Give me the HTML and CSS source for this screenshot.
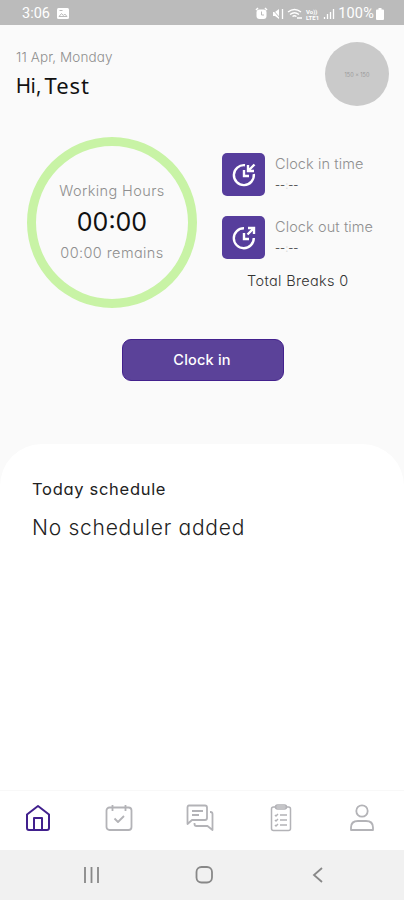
FILE: index.html
```html
<!DOCTYPE html>
<html lang="en">
<head>
<meta charset="utf-8">
<title>Working hours</title>
<link rel="stylesheet" href="styles.css">
</head>
<body>
<div class="status">
  <span class="time">3:06</span>
  <svg class="photo" width="12" height="11" viewBox="0 0 12 11"><rect width="12" height="11" rx="1.5" fill="#fff"/><path d="M2 8.5l2.5-3 1.8 2 1.5-1.500 2.200 2.500zM2.500 2.500h3" fill="none" stroke="#bbb"/></svg>
  <svg class="signals" width="80" height="14" viewBox="0 0 80 14" fill="none" stroke="#fff">
    <path d="M1 3l2-2M10 1l2 2" stroke-width="1.500"/><rect x="1.500" y="2.500" width="10" height="9.500" rx="3" fill="#fff" stroke="none"/><path d="M6.500 4.500v3.500h2.500" stroke="#bbb"/>
    <path d="M18 5h2l4-3v10l-4-3h-2z" fill="#fff" stroke="none"/><path d="M17 2l9 10" stroke="#bbb"/><path d="M27.500 2v10" stroke-width="1.300"/>
    <path d="M33 5q6.500-5 13 0M35 7.500q4.500-3.500 9 0M37.500 9.500q2-1.500 4 0" stroke-width="1.400"/><path d="M42 11h5" stroke-width="1.500"/>
    <text class="lte" x="51" y="6.500">Vo))</text><text class="lte" x="51" y="12.500">LTE1</text>
    <path d="M69.500 12v-2M72.500 12v-5M75.500 12v-7M78.500 12v-10" stroke-width="1.300"/>
  </svg>
  <span class="percent">100%</span>
  <svg class="battery" width="8" height="12" viewBox="0 0 8 12"><path d="M2.500 0h3v1.500H7q1 0 1 1V11q0 1-1 1H1q-1 0-1-1V2.500q0-1 1-1h1.500z" fill="#fff"/></svg>
</div>
<header class="header">
  <div>
    <div class="date">11 Apr, Monday</div>
    <div class="greeting"><span class="hi">Hi,</span><span class="name">Test</span></div>
  </div>
  <div class="avatar">150 x 150</div>
</header>
<main class="summary">
  <section class="ring">
    <span class="working">Working Hours</span>
    <span class="total">00:00</span>
    <span class="remains">00:00 remains</span>
  </section>
  <section class="clocks">
    <div class="clock">
      <div class="tile"><svg width="24" height="24" viewBox="0 0 24 24" fill="none" stroke="#fff" stroke-width="2.400"><path d="M13 2.200A10 10 0 1 0 21.800 11M12 7v6h5M22.500 1.500l-6 6M16 2v6h6"/></svg></div>
      <div class="info"><span class="label in">Clock in time</span><span class="dash">--<i>:</i>--</span></div>
    </div>
    <div class="clock">
      <div class="tile"><svg width="24" height="24" viewBox="0 0 24 24" fill="none" stroke="#fff" stroke-width="2.400"><path d="M12 2.200A10 10 0 1 0 21.800 12M12 7v6h5M15.500 8.500l6-6M16 2h6v6"/></svg></div>
      <div class="info"><span class="label out">Clock out time</span><span class="dash">--<i>:</i>--</span></div>
    </div>
    <div class="breaks">Total Breaks 0</div>
  </section>
</main>
<button class="clock-in">Clock in</button>
<section class="schedule">
  <h2>Today schedule</h2>
  <p>No scheduler added</p>
</section>
<nav class="tabs">
  <svg class="active" viewBox="0 0 28 28"><path d="M3 10.500L14 2l11 8.500V24q0 2-2 2H5q-2 0-2-2zM10 26V14h8v12"/></svg>
  <svg viewBox="0 0 28 28"><rect x="1.500" y="3.500" width="25" height="22.500" rx="3"/><path d="M7.500 1v6M20.500 1v6M9.500 14.500l3.500 3.500 6-6"/></svg>
  <svg viewBox="0 0 28 28"><path d="M3 1.500h16q2 0 2 2V14q0 2-2 2H6l-4.500 4V3.500q0-2 1.500-2zM6 7h11M6 11h7M8.500 19v1q0 2 2 2h11l5 4V10q0-2-2-2H24"/></svg>
  <svg class="thin" viewBox="0 0 28 28"><rect x="4.500" y="3" width="19" height="23.500" rx="2"/><rect x="8.500" y="1" width="11" height="4" rx="2"/><path d="M8 11l1 1 2-2M13 11h7M8 16l1 1 2-2M13 16h7M8 21l1 1 2-2M13 21h7"/></svg>
  <svg viewBox="0 0 28 28"><circle cx="14" cy="7" r="5.700"/><path d="M3 26v-2.500q0-6.500 7-6.500h8q7 0 7 6.500V26z"/></svg>
</nav>
<div class="system">
  <svg viewBox="0 0 20 20"><path d="M3 2v16M9.500 2v16M16 2v16"/></svg>
  <svg viewBox="0 0 20 20"><rect x="1.500" y="2" width="15.500" height="15.500" rx="5"/></svg>
  <svg viewBox="0 0 20 20"><path d="M14 3l-8 7 8 7"/></svg>
</div>
</body>
</html>
```
FILE: styles.css
```css
* { box-sizing: border-box; }
body {
  margin: 0;
  width: 404px;
  height: 900px;
  overflow: hidden;
  display: flex;
  flex-direction: column;
  background: #fafafa;
  color: #222;
  font-family: Inter, sans-serif;
  font-feature-settings: "cv11";
  white-space: nowrap;
}
svg { display: block; flex: none; }
.status {
  height: 25px;
  flex: none;
  display: flex;
  align-items: center;
  padding: 2px 20px 0 22px;
  background: #bbb;
  color: #fff;
  font: 14.500px/20px Roboto, sans-serif;
}
.photo { margin-left: 7px; }
.signals { margin-left: auto; }
.lte { font: bold 6px Roboto, sans-serif; fill: #fff; stroke: none; }
.percent { margin-left: 3px; letter-spacing: 0.2px; }
.battery { margin-left: 2px; }
.header {
  height: 83px;
  flex: none;
  display: flex;
  justify-content: space-between;
  padding: 17px 15px 0 16px;
}
.date { font-size: 13.500px; line-height: 30px; color: #8f8f8f; font-weight: 300; letter-spacing: 0.1px; }
.greeting { display: flex; gap: 3px; line-height: 28px; color: #111; }
.hi { font-size: 20px; }
.name { font: 22px/26px "Noto Sans", sans-serif; letter-spacing: 1px; }
.avatar {
  width: 64px;
  height: 64px;
  border-radius: 50%;
  background: #cacaca;
  color: #999;
  font-size: 5.500px;
  line-height: 66px;
  text-align: center;
}
.summary {
  height: 231px;
  flex: none;
  display: flex;
  padding: 29px 0 0 27px;
}
.ring {
  width: 170px;
  height: 171px;
  border: 9px solid #c8f3a5;
  border-radius: 50%;
  display: flex;
  flex-direction: column;
  align-items: center;
  padding-top: 34px;
  color: #8f8f8f;
  font-size: 14.500px;
  font-weight: 300;
  letter-spacing: 0.4px;
}
.ring span { line-height: 22px; }
.ring .total { font-size: 25px; line-height: 40px; font-weight: 400; color: #111; letter-spacing: 0; }
.clocks { margin: 16px 0 0 25px; }
.clock { display: flex; height: 63px; gap: 10px; }
.tile {
  width: 43px;
  height: 43px;
  border-radius: 5px;
  background: #563d9c;
  display: grid;
  place-items: center;
}
.info { display: flex; flex-direction: column; }
.label { font-size: 14.500px; line-height: 22px; font-weight: 300; color: #8f8f8f; letter-spacing: 0.1px; }
.dash { font-size: 11px; line-height: 20px; color: #555; }
.dash i { font-style: normal; color: #ddd; }
.breaks { padding-left: 25px; font-size: 14.500px; line-height: 4px; color: #333; font-weight: 300; letter-spacing: 0.350px; }
.clock-in {
  width: 162px;
  height: 42px;
  flex: none;
  margin-left: 122px;
  border: 1px solid #43218d;
  border-radius: 9px;
  background: #5b4299;
  color: #fff;
  font: 500 14.500px Inter, sans-serif;
  letter-spacing: 0.2px;
  padding: 0 3px 2px 1px;
}
.schedule {
  height: 346px;
  flex: none;
  margin-top: 63px;
  padding: 31px 32px;
  background: #fff;
  border-radius: 42px 42px 0 0;
}
.schedule h2 { margin: 0; font-size: 16.500px; line-height: 28px; font-weight: 400; letter-spacing: 0.700px; }
.schedule p { margin: 9px 0 0; font-size: 21px; line-height: 32px; font-weight: 300; letter-spacing: 0.740px; }
.tabs {
  height: 60px;
  flex: none;
  display: flex;
  align-items: center;
  justify-content: space-between;
  padding: 0 28px 5px 24px;
  background: #fff;
  border-top: 1px solid #f8f8f8;
}
.tabs svg { width: 28px; height: 28px; fill: none; stroke: #b3b3b7; stroke-width: 1.800; stroke-linejoin: round; }
.tabs .active { stroke: #41208d; stroke-width: 2; }
.tabs .thin { stroke-width: 1.500; }
.system {
  height: 50px;
  flex: none;
  display: flex;
  align-items: center;
  justify-content: space-between;
  padding: 0 76px 0 82px;
  background: #f1f1f1;
}
.system svg { width: 20px; height: 20px; fill: none; stroke: #888; stroke-width: 1.800; }
```
